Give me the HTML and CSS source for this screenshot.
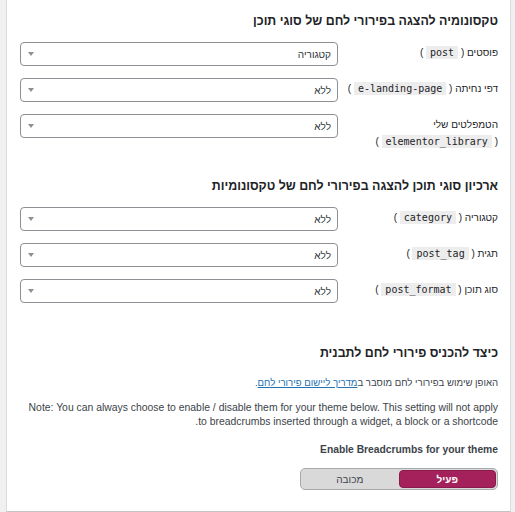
FILE: index.html
```html
<!DOCTYPE html>
<html lang="he" dir="rtl">
<head>
    <meta charset="UTF-8">
    <meta name="viewport" content="width=device-width, initial-scale=1.0">
    <title>פירורי לחם</title>
    <link rel="stylesheet" href="styles.css">
</head>
<body>
    <div class="panel">
        <h2 class="section-title">טקסונומיה להצגה בפירורי לחם של סוגי תוכן</h2>
        <div class="form-rows">
            <div class="row">
                <label class="row-label">פוסטים <span class="slug">( <code>post</code> )</span></label>
                <div class="select"><span>קטגוריה</span><i class="arrow"></i></div>
            </div>
            <div class="row">
                <label class="row-label">דפי נחיתה <span class="slug">( <code>e-landing-page</code> )</span></label>
                <div class="select"><span>ללא</span><i class="arrow"></i></div>
            </div>
            <div class="row">
                <label class="row-label">הטמפלטים שלי <span class="slug">( <code>elementor_library</code> )</span></label>
                <div class="select"><span>ללא</span><i class="arrow"></i></div>
            </div>
        </div>

        <h2 class="section-title second">ארכיון סוגי תוכן להצגה בפירורי לחם של טקסונומיות</h2>
        <div class="form-rows">
            <div class="row">
                <label class="row-label">קטגוריה <span class="slug">( <code>category</code> )</span></label>
                <div class="select"><span>ללא</span><i class="arrow"></i></div>
            </div>
            <div class="row">
                <label class="row-label">תגית <span class="slug">( <code>post_tag</code> )</span></label>
                <div class="select"><span>ללא</span><i class="arrow"></i></div>
            </div>
            <div class="row">
                <label class="row-label">סוג תוכן <span class="slug">( <code>post_format</code> )</span></label>
                <div class="select"><span>ללא</span><i class="arrow"></i></div>
            </div>
        </div>

        <div class="howto">
            <h3 class="howto-title">כיצד להכניס פירורי לחם לתבנית</h3>
            <p class="intro">האופן שימוש בפירורי לחם מוסבר ב<a href="#">מדריך ליישום פירורי לחם</a>.</p>
            <p class="note">Note: You can always choose to enable / disable them for your theme below. This setting will not apply to breadcrumbs inserted through a widget, a block or a shortcode.</p>
            <p class="enable-label">Enable Breadcrumbs for your theme</p>
            <div class="toggle">
                <button class="toggle-btn active">פעיל</button>
                <button class="toggle-btn">מכובה</button>
            </div>
        </div>
    </div>
</body>
</html>
```

FILE: styles.css
```css
html, body {
    margin: 0;
    padding: 0;
}

body {
    background-color: #f0f0f1;
    font-family: 'Liberation Sans', Arial, sans-serif;
    color: #1d2327;
    font-size: 10px;
}

.panel {
    margin: 0 4px 0 6px;
    background: white;
    border: 1px solid #dcdcde;
    border-top: none;
    border-bottom-color: #c3c4c7;
    padding: 12px 12px 21px 13px;
}

.section-title {
    font-size: 12.4px;
    line-height: 18px;
    font-weight: bold;
    margin: 0 0 12px;
}

.section-title.second {
    margin-top: 27px;
}

.form-rows {
    display: grid;
    row-gap: 12px;
}

.row {
    display: grid;
    grid-template-columns: 160px 1fr;
    align-items: start;
}

.row-label {
    padding-top: 2px;
    line-height: 17px;
    font-size: 10px;
    color: #1d2327;
}

.slug {
    white-space: nowrap;
}

code {
    font-family: 'DejaVu Sans Mono', 'Liberation Mono', monospace;
    font-size: 10px;
    background: rgba(0, 0, 0, 0.07);
    padding: 1px 4px;
}

.select {
    height: 24px;
    box-sizing: border-box;
    border: 1px solid #8c8f94;
    border-radius: 4px;
    background: white;
    display: flex;
    align-items: center;
    justify-content: space-between;
    padding: 0 6px 0 7px;
    color: #2c3338;
}

.arrow {
    width: 0;
    height: 0;
    border-left: 3px solid transparent;
    border-right: 3px solid transparent;
    border-top: 4px solid #8c8f94;
}

.howto {
    margin-top: 40px;
}

.howto-title {
    font-size: 12.4px;
    line-height: 20px;
    font-weight: bold;
    margin: 0 0 13px;
}

.howto p {
    margin: 0;
    line-height: 14px;
    color: #3c434a;
}

.intro {
    font-size: 9.6px;
}

.intro a {
    color: #2271b1;
    text-decoration: underline;
}

.howto .note {
    margin-top: 11px;
    font-size: 10.4px;
    max-width: 472px;
}

.howto .enable-label {
    margin-top: 14px;
    font-weight: bold;
    font-size: 10.3px;
}

.toggle {
    margin-top: 11px;
    width: 198px;
    height: 22px;
    box-sizing: border-box;
    display: flex;
    padding: 1px;
    gap: 1px;
    background: #d9d9da;
    border: 1px solid #a7aaad;
    border-radius: 5px;
}

.toggle-btn {
    flex: 1;
    border: none;
    border-radius: 4px;
    background: transparent;
    font-family: 'Liberation Sans', Arial, sans-serif;
    font-size: 10px;
    color: #3c434a;
    padding: 0;
}

.toggle-btn.active {
    background-color: #a4215b;
    color: white;
    font-weight: bold;
    border: 1px solid #8a1a4b;
}
```
